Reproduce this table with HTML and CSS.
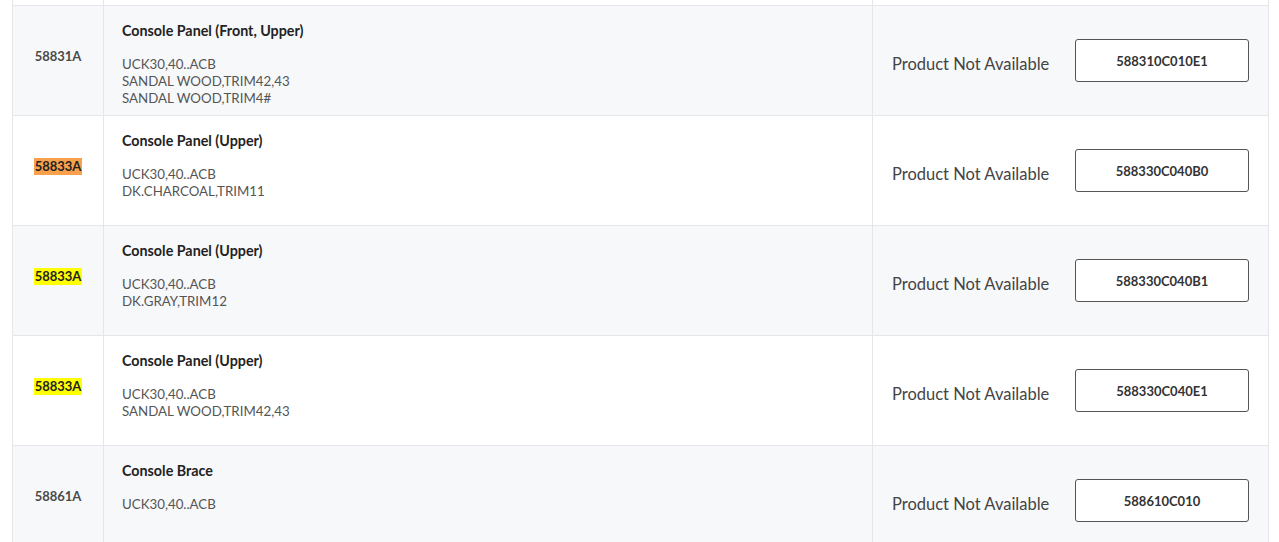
FILE: index.html
```html
<!DOCTYPE html>
<html lang="en">
<head>
<meta charset="utf-8">
<title>Parts</title>
<link rel="stylesheet" href="styles.css">
</head>
<body>
<div class="table">
  <div class="row row-tail">
    <div class="cell c-code"></div>
    <div class="cell c-desc"></div>
    <div class="cell c-buy"></div>
  </div>

  <div class="row row-alt">
    <div class="cell c-code"><span class="code">58831A</span></div>
    <div class="cell c-desc">
      <div class="title">Console Panel (Front, Upper)</div>
      <div class="spec">UCK30,40..ACB<br>SANDAL WOOD,TRIM42,43<br>SANDAL WOOD,TRIM4#</div>
    </div>
    <div class="cell c-buy">
      <span class="status">Product Not Available</span>
      <button class="part-btn">588310C010E1</button>
    </div>
  </div>

  <div class="row">
    <div class="cell c-code"><span class="code hl-orange">58833A</span></div>
    <div class="cell c-desc">
      <div class="title">Console Panel (Upper)</div>
      <div class="spec">UCK30,40..ACB<br>DK.CHARCOAL,TRIM11</div>
    </div>
    <div class="cell c-buy">
      <span class="status">Product Not Available</span>
      <button class="part-btn">588330C040B0</button>
    </div>
  </div>

  <div class="row row-alt">
    <div class="cell c-code"><span class="code hl-yellow">58833A</span></div>
    <div class="cell c-desc">
      <div class="title">Console Panel (Upper)</div>
      <div class="spec">UCK30,40..ACB<br>DK.GRAY,TRIM12</div>
    </div>
    <div class="cell c-buy">
      <span class="status">Product Not Available</span>
      <button class="part-btn">588330C040B1</button>
    </div>
  </div>

  <div class="row">
    <div class="cell c-code"><span class="code hl-yellow">58833A</span></div>
    <div class="cell c-desc">
      <div class="title">Console Panel (Upper)</div>
      <div class="spec">UCK30,40..ACB<br>SANDAL WOOD,TRIM42,43</div>
    </div>
    <div class="cell c-buy">
      <span class="status">Product Not Available</span>
      <button class="part-btn">588330C040E1</button>
    </div>
  </div>

  <div class="row row-alt">
    <div class="cell c-code"><span class="code">58861A</span></div>
    <div class="cell c-desc">
      <div class="title">Console Brace</div>
      <div class="spec">UCK30,40..ACB</div>
    </div>
    <div class="cell c-buy">
      <span class="status">Product Not Available</span>
      <button class="part-btn">588610C010</button>
    </div>
  </div>
</div>
</body>
</html>
```

FILE: styles.css
```css
* { box-sizing: border-box; }

html, body {
  margin: 0;
  padding: 0;
  background: #ffffff;
  font-family: Lato, "Open Sans", "Noto Sans", sans-serif;
  color: #333;
  overflow: hidden;
}

.table {
  margin-left: 12px;
  width: 1257px;
  border-left: 1px solid #e4e6e9;
  border-right: 1px solid #e4e6e9;
}

.row {
  display: grid;
  grid-template-columns: 91px 769px 1fr;
  height: 110px;
  border-bottom: 1px solid #e4e6e9;
  background: #ffffff;
}

.row-alt { background: #f7f8fa; }

.row-tail { height: 6px; }

.cell {
  border-right: 1px solid #e4e6e9;
}
.cell:last-child { border-right: none; }

.c-code {
  display: flex;
  align-items: center;
  justify-content: center;
  padding-bottom: 9px;
}

.code {
  font-size: 13px;
  font-weight: 700;
  color: #4a4a4a;
  line-height: 17px;
  padding: 0 1px;
}

.hl-orange { background: #f8a04b; color: #222; }
.hl-yellow { background: #ffff00; color: #222; }

.c-desc {
  padding: 16px 18px 0 18px;
}

.title {
  font-size: 14.3px;
  font-weight: 700;
  color: #222;
  line-height: 17px;
}

.spec {
  margin-top: 17px;
  font-size: 13.3px;
  line-height: 17px;
  color: #555;
}

.c-buy {
  display: flex;
  align-items: center;
  justify-content: space-between;
  padding: 0 19px 0 19px;
}

.status {
  font-size: 16.5px;
  color: #444;
  margin-top: 6px;
}

.part-btn {
  width: 174px;
  height: 43px;
  background: #ffffff;
  border: 1px solid #555;
  border-radius: 3px;
  font-family: Lato, "Open Sans", "Noto Sans", sans-serif;
  font-size: 13px;
  font-weight: 700;
  color: #333;
  padding: 0;
}
```
